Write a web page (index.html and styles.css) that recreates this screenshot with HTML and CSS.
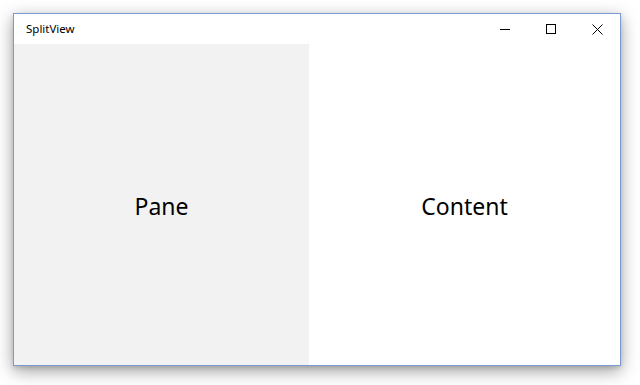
FILE: index.html
```html
<!DOCTYPE html>
<html>
<head>
<meta charset="utf-8">
<link rel="stylesheet" href="styles.css">
</head>
<body>
<div class="window">
  <div class="titlebar">
    <div class="title">SplitView</div>
    <div class="controls">
      <div class="btn"><svg width="10" height="10" viewBox="0 0 10 10"><path d="M0 5.5H10" stroke="#000" stroke-width="1"/></svg></div>
      <div class="btn"><svg width="10" height="10" viewBox="0 0 10 10"><rect x="0.5" y="0.5" width="9" height="9" fill="none" stroke="#000" stroke-width="1"/></svg></div>
      <div class="btn"><svg width="11" height="11" viewBox="0 0 11 11"><path d="M0.5 0.5L10.5 10.5M10.5 0.5L0.5 10.5" stroke="#000" stroke-width="1"/></svg></div>
    </div>
  </div>
  <div class="main">
    <div class="pane">Pane</div>
    <div class="content">Content</div>
  </div>
</div>
</body>
</html>
```
FILE: styles.css
```css
html, body {
  margin: 0;
  padding: 0;
  background: #ffffff;
}
body {
  padding: 13px 19px 19px 13px;
  width: 608px;
  height: 353px;
  font-family: "Noto Sans", "Open Sans", sans-serif;
}
.window {
  width: 606px;
  height: 351px;
  border: 1px solid #7b9ad0;
  background: #fff;
  display: flex;
  flex-direction: column;
  box-shadow: 0 5px 16px rgba(0,0,0,0.38), 0 2px 4px rgba(0,0,0,0.12);
}
.titlebar {
  height: 30px;
  display: flex;
  align-items: center;
  justify-content: space-between;
}
.title {
  font-size: 11.5px;
  color: #000;
  padding-left: 12px;
  padding-bottom: 1px;
}
.controls {
  display: flex;
  height: 30px;
}
.btn {
  width: 46px;
  height: 30px;
  display: flex;
  align-items: center;
  justify-content: center;
}
.btn svg { display: block; }
.main {
  flex: 1;
  display: flex;
}
.pane {
  width: 295px;
  background: #f2f2f2;
  display: flex;
  align-items: center;
  justify-content: center;
  font-size: 23px;
  color: #000;
  padding-top: 3px;
}
.content {
  flex: 1;
  display: flex;
  align-items: center;
  justify-content: center;
  font-size: 23px;
  color: #000;
  padding-top: 3px;
}
```
